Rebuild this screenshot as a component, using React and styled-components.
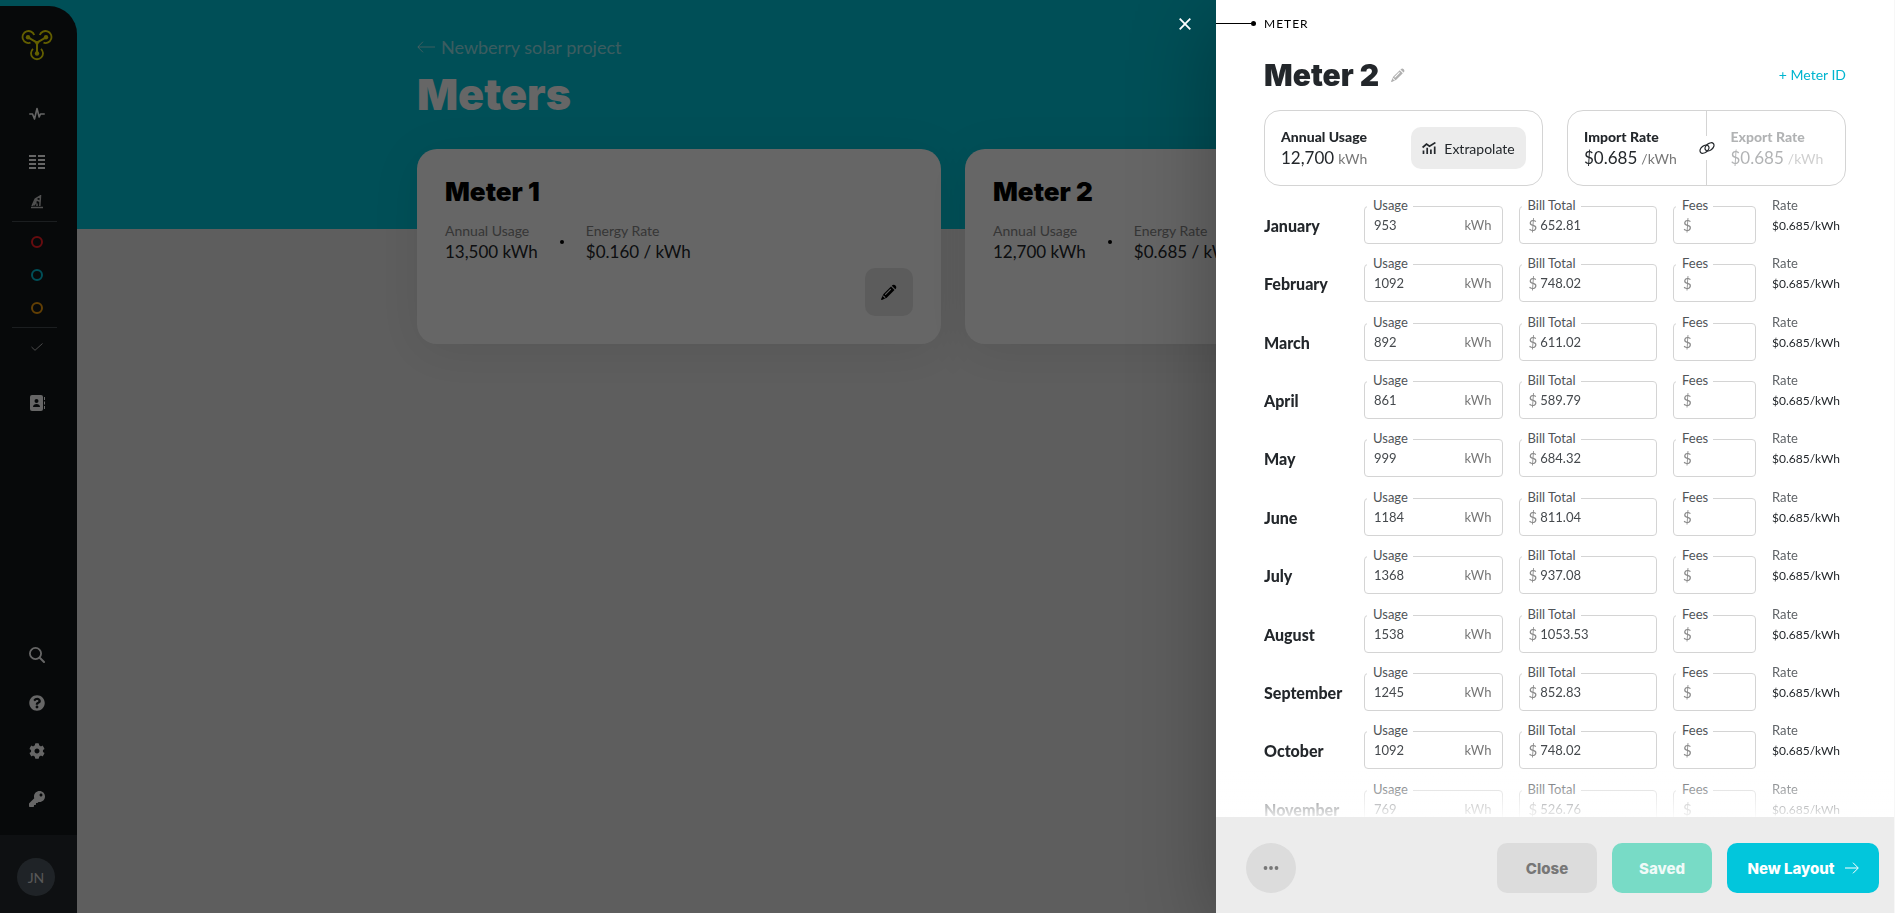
import React from "react";
import styled, { createGlobalStyle } from "styled-components";
import { FaQuestionCircle, FaCog, FaKey } from "react-icons/fa";

const GlobalStyle = createGlobalStyle`
  *, *::before, *::after { box-sizing: border-box; }
  body {
    margin: 0;
    font-family: Lato, "Liberation Sans", sans-serif;
    color: #23272b;
    background: #ebebeb;
  }
  button, input { font: inherit; color: inherit; }
  button { border: 0; padding: 0; cursor: pointer; }
  h1, h2, h3, p, dl, dd, dt, ul { margin: 0; padding: 0; }
  svg { display: block; }
`;

const displayFont = 'Inter, Lato, "Liberation Sans", sans-serif';

const Page = styled.div`
  min-height: 100vh;
  padding-left: 77px;
  background: linear-gradient(#00c5d9 229px, #ebebeb 0);
`;

/* Sidebar */
const Sidebar = styled.aside`
  position: fixed;
  top: 6px;
  bottom: 0;
  left: 0;
  width: 77px;
  display: flex;
  flex-direction: column;
  background: #12171a;
  border-top-right-radius: 28px;
  overflow: hidden;
`;

const LogoLink = styled.a`
  display: flex;
  justify-content: center;
  height: 84px;
  padding: 24px 4px 0 0;
`;

const Nav = styled.nav`
  display: flex;
  flex-direction: column;
  margin-top: ${(p) => (p.$bottom ? "auto" : "0")};
`;

const NavLink = styled.a`
  display: flex;
  align-items: center;
  justify-content: center;
  height: ${(p) => p.$height || 48}px;
  margin-top: ${(p) => p.$space || 0}px;
  padding-right: 4px;
  font-size: 16px;
  color: #fff;
`;

const NavDivider = styled.hr`
  width: 45px;
  height: 1px;
  margin: 3px 20px 3px 12px;
  border: 0;
  background: #444b50;
`;

const Ring = styled.span`
  width: 12px;
  height: 12px;
  border: 2px solid ${(p) => p.$color};
  border-radius: 50%;
`;

const Account = styled.div`
  height: 78px;
  margin-top: 12px;
  padding: 23px 0 0 17px;
  background: #23282d;
`;

const Avatar = styled.button`
  width: 38px;
  height: 38px;
  border-radius: 50%;
  background: #4f5961;
  color: #dcdcdc;
  font-size: 14px;
`;

/* Meters page */
const Main = styled.main`
  padding: 34px 66px 0 0;
`;

const Container = styled.div`
  max-width: 1072px;
  margin: 0 auto;
`;

const BackLink = styled.a`
  display: inline-flex;
  align-items: center;
  gap: 6px;
  line-height: 26px;
  font-size: 18px;
  color: rgba(255, 255, 255, 0.6);
  text-decoration: none;
`;

const PageTitle = styled.h1`
  font-family: ${displayFont};
  font-size: 43px;
  line-height: 56px;
  font-weight: 900;
  color: #fff;
  margin: 6px 0 27px;
`;

const Cards = styled.div`
  display: grid;
  grid-template-columns: 1fr 1fr;
  gap: 24px;
`;

const Card = styled.article`
  display: flex;
  flex-direction: column;
  min-height: 195px;
  padding: 28px;
  background: #fff;
  border-radius: 20px;
  box-shadow: 0 8px 50px rgba(0, 0, 0, 0.08);
`;

const CardTitle = styled.h2`
  font-family: ${displayFont};
  font-size: 26px;
  line-height: 30px;
  font-weight: 900;
  color: #000;
`;

const Stats = styled.div`
  display: flex;
  align-items: center;
  gap: 22px;
  margin-top: 14px;
`;

const StatLabel = styled.p`
  font-size: 14px;
  line-height: 20px;
  color: #888;
`;

const StatValue = styled.p`
  font-size: 17px;
  line-height: 22px;
  color: #23272b;
`;

const StatDot = styled.span`
  width: 4px;
  height: 4px;
  border-radius: 50%;
  background: #000;
`;

const EditButton = styled.button`
  display: flex;
  align-items: center;
  justify-content: center;
  align-self: flex-end;
  width: 48px;
  height: 48px;
  margin-top: auto;
  border-radius: 10px;
  background: #e6e6e6;
  color: #000;
`;

/* Drawer */
const Overlay = styled.div`
  position: fixed;
  inset: 0;
  background: rgba(0, 0, 0, 0.6);
`;

const Drawer = styled.section`
  position: fixed;
  top: 0;
  right: 0;
  bottom: 0;
  width: 679px;
  max-width: 100%;
  display: flex;
  flex-direction: column;
  background: #fff;
  border-right: 1px solid #f7f7f7;
  box-shadow: 0 20px 80px rgba(0, 0, 0, 0.3);
`;

const CloseIcon = styled.button`
  position: absolute;
  top: 12px;
  right: 100%;
  width: 24px;
  height: 24px;
  margin-right: 19px;
  display: flex;
  align-items: center;
  justify-content: center;
  background: none;
  color: #fff;
`;

const Eyebrow = styled.div`
  display: flex;
  align-items: center;
  height: 47px;
  font-size: 12px;
  line-height: 16px;
  letter-spacing: 1px;
  color: #000;
`;

const Leader = styled.span`
  display: flex;
  align-items: center;
  width: 40px;
  margin-right: 8px;
  &::before {
    content: "";
    flex: 1;
    height: 1px;
    background: #000;
  }
  &::after {
    content: "";
    width: 5px;
    height: 5px;
    border-radius: 50%;
    background: #000;
  }
`;

const DrawerHeader = styled.header`
  display: flex;
  align-items: center;
  padding: 0 48px;
  height: 55px;
`;

const DrawerTitle = styled.h2`
  font-family: ${displayFont};
  font-size: 30px;
  line-height: 40px;
  font-weight: 900;
`;

const RenameButton = styled.button`
  margin-left: 12px;
  background: none;
  color: #b0b0b0;
`;

const MeterIdButton = styled.button`
  margin-left: auto;
  background: none;
  color: #00b5cf;
  font-size: 14px;
`;

const Summary = styled.div`
  display: grid;
  grid-template-columns: 1fr 1fr;
  gap: 24px;
  padding: 8px 48px 0;
`;

const SummaryBox = styled.div`
  display: flex;
  align-items: center;
  height: 76px;
  padding-right: 16px;
  border: 1px solid #d4d4d4;
  border-radius: 16px;
`;

const RateBox = styled(SummaryBox)`
  display: grid;
  grid-template-columns: minmax(0, 1fr) 24px minmax(0, 1fr);
  align-items: stretch;
  padding: 0;
`;

const Figure = styled.div`
  align-self: center;
  opacity: ${(p) => (p.$muted ? 0.35 : 1)};
  padding-left: ${(p) => (p.$muted ? 12 : 16)}px;
`;

const FigureLabel = styled.p`
  font-size: 14px;
  line-height: 20px;
  font-weight: 900;
`;

const FigureValue = styled.p`
  display: flex;
  align-items: baseline;
  gap: 4px;
  font-size: 17px;
  line-height: 22px;
  white-space: nowrap;
  span {
    font-size: 14px;
    color: #777;
  }
`;

const LinkDivider = styled.div`
  display: flex;
  flex-direction: column;
  align-items: center;
  &::before,
  &::after {
    content: "";
    flex: 1;
    width: 1px;
    background: #d4d4d4;
  }
`;

const LinkButton = styled.button`
  height: 24px;
  background: none;
`;

const ExtrapolateButton = styled.button`
  display: flex;
  align-items: center;
  justify-content: center;
  gap: 8px;
  width: 115px;
  height: 42px;
  margin-left: auto;
  border-radius: 10px;
  background: #ececec;
  font-size: 14px;
`;

const Scroller = styled.div`
  flex: 1;
  min-height: 0;
  overflow-y: auto;
  scrollbar-width: none;
  padding: 8px 48px 0;
`;

const Months = styled.div`
  display: grid;
  grid-auto-rows: 1fr;
  min-height: 642px;
`;

const MonthRow = styled.div`
  display: grid;
  grid-template-columns: 84px 1fr 1fr 83px 74px;
  column-gap: 16px;
  align-items: start;
  padding-top: 12px;
`;

const MonthName = styled.h3`
  padding-top: 7px;
  font-size: 16px;
  line-height: 26px;
  font-weight: 900;
`;

const Field = styled.div`
  position: relative;
  display: flex;
  align-items: center;
  gap: 3px;
  height: 38px;
  padding: 0 10px 0 9px;
  border: 1px solid #d4d4d4;
  border-radius: 4px;
  font-size: 13px;
`;

const FieldLabel = styled.label`
  position: absolute;
  top: -12px;
  left: 2px;
  padding: 0 5px 0 6px;
  line-height: 20px;
  background: #fff;
  color: #505458;
`;

const FieldInput = styled.input`
  flex: 1;
  width: 100%;
  min-width: 0;
  padding: 0;
  border: 0;
  outline: 0;
  background: none;
  color: #45494d;
`;

const Affix = styled.span`
  color: ${(p) => (p.$unit ? "#777" : "#8a8a8a")};
  font-size: ${(p) => (p.$unit ? 13 : 15)}px;
`;

const RateList = styled.dl`
  font-size: 13px;
  line-height: 20px;
  margin-top: -11px;
  white-space: nowrap;
  dt {
    color: #606468;
  }
  dd {
    margin-top: 1px;
    font-size: 12px;
  }
`;

const Fade = styled.div`
  position: relative;
  height: 0;
  &::before {
    content: "";
    position: absolute;
    inset: -50px 0 0;
    background: linear-gradient(rgba(255, 255, 255, 0), rgba(255, 255, 255, 0.9));
    pointer-events: none;
  }
`;

const Footer = styled.footer`
  position: relative;
  display: flex;
  align-items: center;
  gap: 15px;
  height: 96px;
  padding: 6px 15px 0 30px;
  background: #ececec;
`;

const FooterButton = styled.button`
  display: flex;
  align-items: center;
  justify-content: center;
  gap: 10px;
  min-width: ${(p) => (p.$wide ? 152 : 100)}px;
  height: 50px;
  border-radius: 10px;
  font-family: ${displayFont};
  font-size: 15px;
  font-weight: 800;
  background: ${(p) => p.$bg};
  color: ${(p) => p.$fg};
`;

const MoreButton = styled.button`
  display: flex;
  align-items: center;
  justify-content: center;
  width: 50px;
  height: 50px;
  margin-right: auto;
  border-radius: 50%;
  background: #dcdcdc;
  color: #777;
`;

const Logo = () => (
  <svg width="32" height="31" viewBox="0 0 32 31" fill="none" stroke="#f5ea00" strokeWidth="1.800">
    <path d="M13.200 5A6 6 0 1 0 9.500 12.700M18.800 5A6 6 0 1 1 22.500 12.700M12 18.800A6 6 0 1 0 20 18.800" />
    <path d="M7 7.300l9 5.200 9-5.200M16 12.500v10.700" strokeWidth="2" />
    <g fill="#f5ea00" stroke="none">
      <circle cx="7" cy="7.300" r="2.200" />
      <circle cx="25" cy="7.300" r="2.200" />
      <circle cx="16" cy="23.500" r="2.200" />
      <path d="M12.500 10L16 11.500l3.500-1.500L16.800 15h-1.600z" />
    </g>
  </svg>
);

const PulseIcon = () => (
  <svg width="16" height="14" viewBox="0 0 16 14" fill="none" stroke="currentColor" strokeWidth="1.600" strokeLinejoin="round" strokeLinecap="round">
    <path d="M.8 7h2.700l2 5L8 1.500l2.200 8.500L11.500 7h3.700" />
  </svg>
);

const ListIcon = () => (
  <svg width="16" height="14" viewBox="0 0 16 14" fill="currentColor">
    {[0, 4, 8, 12].map((y) => (
      <path key={y} d={`M0 ${y}h7v2H0zM9 ${y}h7v2H9z`} />
    ))}
  </svg>
);

const ArrayIcon = () => (
  <svg width="14" height="14" viewBox="0 0 14 14" fill="none" stroke="#c8c8c8">
    <path d="M1 12.500h12" strokeWidth="1.600" />
    <path d="M2 11L5.200 4 10.500.8 9.800 11M5.500 4.500l4.300 1.800M3.500 8h3M7 11V8.500" strokeWidth="1.500" />
    <path d="M2.500 10.500L6 3.500l1.500 1L5 10.500z" fill="#c8c8c8" stroke="none" />
  </svg>
);

const CheckIcon = () => (
  <svg width="12" height="8" viewBox="0 0 12 8" fill="none" stroke="#bbb">
    <path d="M.5 4l3.500 3.300L11.500.5" />
  </svg>
);

const ContactsIcon = () => (
  <svg width="16" height="16" viewBox="0 0 16 16" fill="currentColor">
    <rect x="1" width="13" height="16" rx="2" />
    <path d="M15 2h1v3h-1zM15 6.500h1v3h-1zM15 11h1v3h-1z" />
    <g fill="#12171a">
      <circle cx="7.500" cy="6" r="2" />
      <path d="M4 12c0-2 1.500-3 3.500-3s3.500 1 3.500 3z" />
    </g>
  </svg>
);

const SearchIcon = () => (
  <svg width="16" height="16" viewBox="0 0 16 16" fill="none" stroke="currentColor" strokeLinecap="round">
    <circle cx="6.500" cy="6.500" r="5.600" strokeWidth="1.800" />
    <path d="M11 11l4 4" strokeWidth="2" />
  </svg>
);

const PencilIcon = ({ size, line }) => (
  <svg width={size} height={size} viewBox="0 0 16 16" fill="currentColor">
    <path d="M10.800 1.700l.700-.7a2.600 2.600 0 0 1 3.500 3.500l-.7.700z" />
    <path d="M10 2.500L13.500 6 6 13.500 1 15.900a.8.800 0 0 1-.9-.9L2.500 10z" />
    <path d="M4.500 10.300l5-5M2.600 12.200l1.200 1.200" stroke={line} strokeWidth="1.200" strokeLinecap="round" />
  </svg>
);

const ArrowIcon = ({ back }) => (
  <svg width={back ? 18 : 14} height="12" viewBox={back ? "0 0 18 12" : "0 0 14 12"} fill="none" stroke="currentColor" strokeWidth="1">
    <path d={back ? "M18 6H1M6 .7L.800 6 6 11.300" : "M0 6h13M8 .7L13.300 6 8 11.300"} />
  </svg>
);

const CrossIcon = () => (
  <svg width="12" height="12" viewBox="0 0 12 12" fill="none" stroke="currentColor" strokeWidth="1.800">
    <path d="M.7.7l10.600 10.600M11.300.7L.7 11.300" />
  </svg>
);

const ChartIcon = () => (
  <svg width="14" height="12" viewBox="0 0 14 12" fill="none" stroke="currentColor" strokeWidth="1.700">
    <path d="M.6 5.500L4.500 2l3 2.200L13.400.6" />
    <path d="M1.500 12V8.500M5.200 12V5.800M8.900 12V7.500M12.700 12V4.500" />
  </svg>
);

const ChainIcon = () => (
  <svg width="16" height="12" viewBox="0 0 16 12" fill="none" stroke="currentColor" strokeWidth="1.300">
    <ellipse cx="5.500" cy="7.200" rx="5" ry="3.300" transform="rotate(-38 5.500 7.200)" />
    <ellipse cx="10.500" cy="4.800" rx="5" ry="3.300" transform="rotate(-38 10.500 4.800)" />
  </svg>
);

const DotsIcon = () => (
  <svg width="16" height="4" viewBox="0 0 16 4" fill="currentColor">
    <circle cx="2.500" cy="2" r="1.900" />
    <circle cx="8" cy="2" r="1.900" />
    <circle cx="13.500" cy="2" r="1.900" />
  </svg>
);

const meters = [
  { name: "Meter 1", usage: "13,500 kWh", rate: "$0.160 / kWh" },
  { name: "Meter 2", usage: "12,700 kWh", rate: "$0.685 / kWh" },
];

const months = [
  ["January", "953", "652.81"],
  ["February", "1092", "748.02"],
  ["March", "892", "611.02"],
  ["April", "861", "589.79"],
  ["May", "999", "684.32"],
  ["June", "1184", "811.04"],
  ["July", "1368", "937.08"],
  ["August", "1538", "1053.53"],
  ["September", "1245", "852.83"],
  ["October", "1092", "748.02"],
  ["November", "769", "526.76"],
];

function LabeledField({ id, label, value, prefix, suffix }) {
  return (
    <Field>
      <FieldLabel htmlFor={id}>{label}</FieldLabel>
      {prefix && <Affix>{prefix}</Affix>}
      <FieldInput id={id} defaultValue={value} />
      {suffix && <Affix $unit>{suffix}</Affix>}
    </Field>
  );
}

export default function App() {
  return (
    <>
      <GlobalStyle />
      <Page>
        <Sidebar>
          <LogoLink href="#home" aria-label="Home"><Logo /></LogoLink>
          <Nav>
            <NavLink href="#activity" aria-label="Activity"><PulseIcon /></NavLink>
            <NavLink href="#projects" aria-label="Projects"><ListIcon /></NavLink>
            <NavLink href="#arrays" aria-label="Arrays" $height={32}><ArrayIcon /></NavLink>
            <NavDivider />
            <NavLink href="#red" aria-label="Blocked" $height={33}><Ring $color="#ff1f26" /></NavLink>
            <NavLink href="#teal" aria-label="Active" $height={33}><Ring $color="#00c5dc" /></NavLink>
            <NavLink href="#amber" aria-label="Waiting" $height={33}><Ring $color="#f59e0b" /></NavLink>
            <NavDivider />
            <NavLink href="#done" aria-label="Done" $height={32}><CheckIcon /></NavLink>
            <NavLink href="#contacts" aria-label="Contacts" $space={16}><ContactsIcon /></NavLink>
          </Nav>
          <Nav $bottom>
            <NavLink href="#search" aria-label="Search"><SearchIcon /></NavLink>
            <NavLink href="#help" aria-label="Help"><FaQuestionCircle /></NavLink>
            <NavLink href="#settings" aria-label="Settings"><FaCog /></NavLink>
            <NavLink href="#keys" aria-label="Keys"><FaKey /></NavLink>
          </Nav>
          <Account><Avatar>JN</Avatar></Account>
        </Sidebar>

        <Main>
          <Container>
            <BackLink href="#project"><ArrowIcon back />Newberry solar project</BackLink>
            <PageTitle>Meters</PageTitle>
            <Cards>
              {meters.map((m) => (
                <Card key={m.name}>
                  <CardTitle>{m.name}</CardTitle>
                  <Stats>
                    <div>
                      <StatLabel>Annual Usage</StatLabel>
                      <StatValue>{m.usage}</StatValue>
                    </div>
                    <StatDot />
                    <div>
                      <StatLabel>Energy Rate</StatLabel>
                      <StatValue>{m.rate}</StatValue>
                    </div>
                  </Stats>
                  <EditButton aria-label={`Edit ${m.name}`}><PencilIcon size={16} line="#e6e6e6" /></EditButton>
                </Card>
              ))}
            </Cards>
          </Container>
        </Main>
      </Page>

      <Overlay />

      <Drawer aria-label="Meter">
        <CloseIcon aria-label="Close panel"><CrossIcon /></CloseIcon>
        <Eyebrow><Leader />METER</Eyebrow>
        <DrawerHeader>
          <DrawerTitle>Meter 2</DrawerTitle>
          <RenameButton aria-label="Rename meter"><PencilIcon size={14} line="#fff" /></RenameButton>
          <MeterIdButton>+ Meter ID</MeterIdButton>
        </DrawerHeader>
        <Summary>
          <SummaryBox>
            <Figure>
              <FigureLabel>Annual Usage</FigureLabel>
              <FigureValue>12,700 <span>kWh</span></FigureValue>
            </Figure>
            <ExtrapolateButton><ChartIcon />Extrapolate</ExtrapolateButton>
          </SummaryBox>
          <RateBox>
            <Figure>
              <FigureLabel>Import Rate</FigureLabel>
              <FigureValue>$0.685 <span>/kWh</span></FigureValue>
            </Figure>
            <LinkDivider><LinkButton aria-label="Link rates"><ChainIcon /></LinkButton></LinkDivider>
            <Figure $muted>
              <FigureLabel>Export Rate</FigureLabel>
              <FigureValue>$0.685 <span>/kWh</span></FigureValue>
            </Figure>
          </RateBox>
        </Summary>
        <Scroller>
          <Months>
            {months.map(([name, usage, bill]) => (
              <MonthRow key={name}>
                <MonthName>{name}</MonthName>
                <LabeledField id={`${name}-usage`} label="Usage" value={usage} suffix="kWh" />
                <LabeledField id={`${name}-bill`} label="Bill Total" value={bill} prefix="$" />
                <LabeledField id={`${name}-fees`} label="Fees" value="" prefix="$" />
                <RateList>
                  <dt>Rate</dt>
                  <dd>$0.685/kWh</dd>
                </RateList>
              </MonthRow>
            ))}
          </Months>
        </Scroller>
        <Fade />
        <Footer>
          <MoreButton aria-label="More"><DotsIcon /></MoreButton>
          <FooterButton $bg="#dcdcdc" $fg="#777">Close</FooterButton>
          <FooterButton $bg="#78dbc6" $fg="#f0faf8">Saved</FooterButton>
          <FooterButton $wide $bg="#02c6dc" $fg="#fff">New Layout<ArrowIcon /></FooterButton>
        </Footer>
      </Drawer>
    </>
  );
}
